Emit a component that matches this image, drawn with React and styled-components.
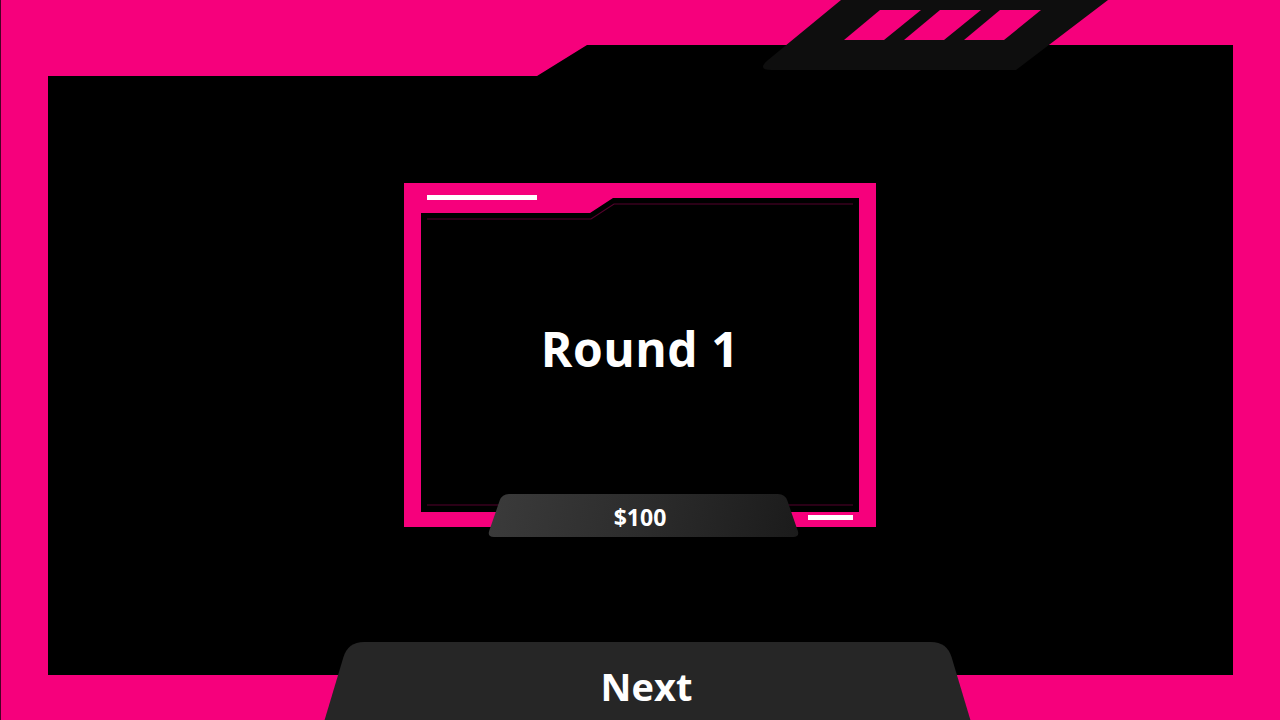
import React from "react";
import styled, { createGlobalStyle } from "styled-components";

const PINK = "#f6007c";

const Global = createGlobalStyle`
  html, body { margin: 0; padding: 0; background: ${PINK}; }
  body { font-family: "Open Sans", "Liberation Sans", sans-serif; }
  * { box-sizing: border-box; }
`;

function toward(p, q, r) {
  const dx = q[0] - p[0];
  const dy = q[1] - p[1];
  const len = Math.hypot(dx, dy);
  const k = Math.min(r, len / 2) / len;
  return `${(p[0] + dx * k).toFixed(2)} ${(p[1] + dy * k).toFixed(2)}`;
}

function roundedPoly(pts, r) {
  const n = pts.length;
  let d = "";
  for (let i = 0; i < n; i++) {
    const p = pts[i];
    const prev = pts[(i - 1 + n) % n];
    const next = pts[(i + 1) % n];
    const rr = Array.isArray(r) ? r[i] : r;
    if (rr === 0) {
      d += (i === 0 ? "M" : " L") + `${p[0]} ${p[1]}`;
      continue;
    }
    const a = toward(p, prev, rr);
    const b = toward(p, next, rr);
    d += (i === 0 ? `M${a}` : ` L${a}`) + ` Q${p[0]} ${p[1]} ${b}`;
  }
  return d + " Z";
}

const Stage = styled.div`
  position: relative;
  width: 1280px;
  height: 720px;
  overflow: hidden;
  background: ${PINK};
  border-left: 1px solid #4a0026;
  padding: 45px 47px 45px 47px;
`;

const Panel = styled.main`
  width: 100%;
  height: 100%;
  background: #000;
  clip-path: polygon(0 31px, 489px 31px, 539px 0, 100% 0, 100% 100%, 0 100%);
  display: flex;
  flex-direction: column;
  align-items: flex-start;
  padding: 138px 0 0 356px;
`;

const Frame = styled.section`
  position: relative;
  width: 472px;
  height: 344px;
  background: ${PINK};
  padding: 15px 17px;
`;

const Screen = styled.div`
  position: relative;
  width: 100%;
  height: 100%;
  background: #000;
  clip-path: polygon(0 15px, 169px 15px, 192px 0, 100% 0, 100% 100%, 0 100%);
  display: flex;
  align-items: center;
  justify-content: center;
  padding-bottom: 12px;
`;

const Outline = styled.svg`
  position: absolute;
  inset: 0;
  width: 100%;
  height: 100%;
  pointer-events: none;
`;

const Title = styled.h1`
  margin: 0;
  color: #fff;
  font-family: "Open Sans", "Liberation Sans", sans-serif;
  font-weight: 700;
  font-size: 48px;
  line-height: 1;
  letter-spacing: 0.5px;
`;

const Accent = styled.span`
  position: absolute;
  background: #fff;
  height: 5px;
  width: ${(p) => p.$w}px;
  ${(p) => (p.$top ? `left: 23px; top: 12px;` : `right: 23px; bottom: 7px;`)}
`;

const Tag = styled.div`
  position: absolute;
  left: 83px;
  top: 311px;
  width: 313px;
  height: 43px;
  display: flex;
  align-items: center;
  justify-content: center;
  background: linear-gradient(100deg, #3b3b3b 0%, #2c2c2c 50%, #1b1b1b 100%);
  clip-path: path("${(p) => p.$path}");
  color: #fff;
  font-family: "Open Sans", "Liberation Sans", sans-serif;
  font-weight: 700;
  font-size: 23px;
  padding: 3px 7px 0 0;
`;

const NextButton = styled.button`
  position: absolute;
  left: 323px;
  bottom: 0;
  width: 647px;
  height: 78px;
  border: 0;
  background: #262626;
  clip-path: path("${(p) => p.$path}");
  color: #fff;
  font-family: "Open Sans", "Liberation Sans", sans-serif;
  font-weight: 700;
  font-size: 38px;
  display: flex;
  align-items: center;
  justify-content: center;
  padding: 10px 2px 0 0;
  cursor: pointer;
`;

const Badge = styled.svg`
  position: absolute;
  left: 740px;
  top: 0;
  width: 380px;
  height: 80px;
`;

const tagPath = roundedPoly(
  [
    [15, 0],
    [298, 0],
    [313, 43],
    [0, 43],
  ],
  7
);

const nextPath = roundedPoly(
  [
    [24, 0],
    [623, 0],
    [647, 80],
    [0, 80],
  ],
  [16, 16, 0, 0]
);

const badgePath = roundedPoly(
  [
    [100, 0],
    [367, 0],
    [275, 70],
    [15, 70],
  ],
  [0, 0, 0, 16]
);

const slats = [0, 60, 120];

export default function App() {
  return (
    <>
      <Global />
      <Stage>
        <Panel>
          <Frame>
            <Accent $top $w={110} />
            <Screen>
              <Outline viewBox="0 0 438 314" preserveAspectRatio="none">
                <polyline
                  points="6,21 170,21 193,6 432,6"
                  fill="none"
                  stroke="#55002c"
                  strokeWidth="1.2"
                />
                <line x1="6" y1="307" x2="432" y2="307" stroke="#55002c" strokeWidth="1.2" />
              </Outline>
              <Title>Round 1</Title>
            </Screen>
            <Accent $w={45} />
            <Tag $path={tagPath}>$100</Tag>
          </Frame>
        </Panel>
        <Badge viewBox="0 0 380 80">
          <path d={badgePath} fill="#0e0e0e" />
          {slats.map((dx) => (
            <polygon
              key={dx}
              points={`${139 + dx},10 ${180 + dx},10 ${143 + dx},40 ${103 + dx},40`}
              fill={PINK}
            />
          ))}
        </Badge>
        <NextButton $path={nextPath}>Next</NextButton>
      </Stage>
    </>
  );
}
